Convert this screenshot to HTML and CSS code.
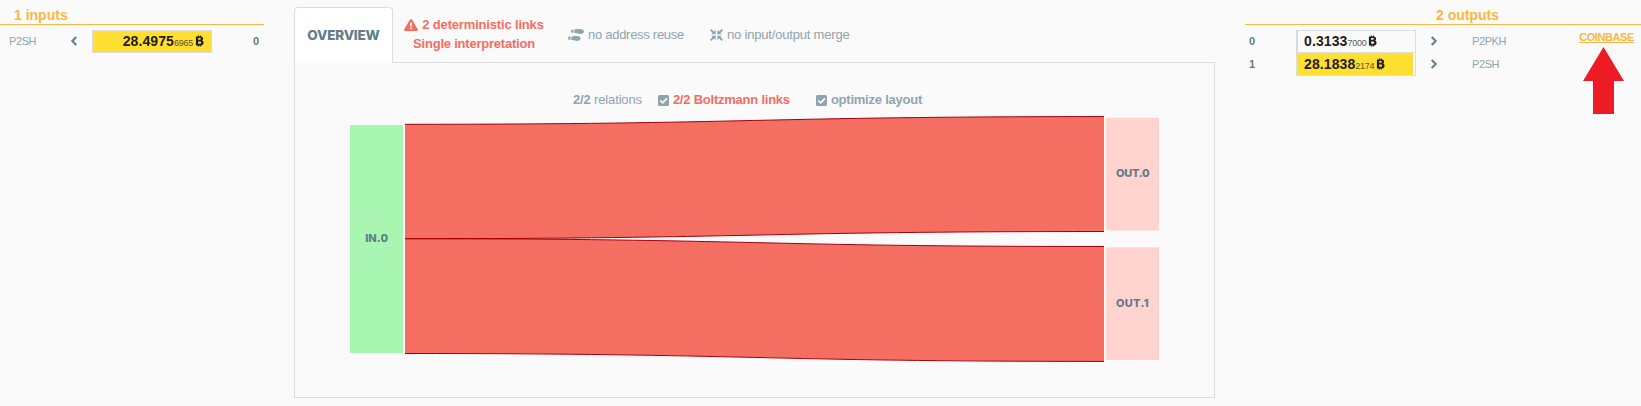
FILE: index.html
```html
<!DOCTYPE html>
<html lang="en">
<head>
<meta charset="utf-8">
<title>Transaction overview</title>
<link rel="stylesheet" href="styles.css">
</head>
<body>
<main class="page">
  <section class="inputs">
    <h2 class="heading"><span>1 inputs</span></h2>
    <div class="row row-in">
      <span class="type">P2SH</span>
      <svg class="chev" viewBox="0 0 8 10"><path d="M6.300 1 2.300 5l4 4"/></svg>
      <span class="amount amount-in"><b>28.4975</b><small>6965</small><svg class="btc" viewBox="0 0 10 12"><path fill-rule="evenodd" d="M1 1h2V0h1.300v1h1V0h1.300v1.100C8.300 1.300 9 2.200 9 3.400c0 1-.4 1.700-1.200 2.100C8.900 5.900 9.500 6.700 9.500 7.900c0 1.800-1 2.900-2.900 3.100v1H5.300v-1h-1v1H3v-1H1zM3.500 2.800v1.900h1.900c1.500 0 1.500-1.900 0-1.900zM3.500 6.500v2.600h2.100c1.700 0 1.700-2.600 0-2.600z"/></svg></span>
      <span class="index">0</span>
    </div>
  </section>

  <section class="center">
    <nav class="tabs">
      <div class="tab"><span>OVERVIEW</span></div>
      <div class="alert">
        <div class="line"><svg class="warn" viewBox="0 0 14 12"><path fill-rule="evenodd" d="M6 .6Q7-.5 8 .6l5.700 9.700Q14.200 12 12.800 12H1.200Q-.2 12 .3 10.300zM6 3.800l.3 3.700h1.400L8 3.800zM6.200 8.500v1.700h1.600V8.500z"/></svg><span class="deterministic">2 deterministic links</span></div>
        <div class="line"><span class="interpretation">Single interpretation</span></div>
      </div>
      <div class="note note-reuse"><svg class="feet" viewBox="0 0 16 12"><path d="M6.300.4C8 .5 9-.1 11.500 0 14.300.1 16 1.100 16 2.600S14.300 5 12.500 5C10.500 5 9.500 3.700 6.300 4zM5.400.6v3.300C3.800 4 3 3.300 3 2.300S3.800.6 5.400.6zM3.300 7.400C5 7.500 6.300 6.800 8.400 6.900c2.700.1 4.300.9 4.300 2.400S11 11.900 9.200 11.900c-2 0-2.700-1.200-5.900-.9zM2.400 7.600v3.300C.9 11 0 10.300 0 9.300s.8-1.700 2.400-1.700z"/></svg><span>no address reuse</span></div>
      <div class="note note-merge"><svg class="compress" viewBox="0 0 13 12"><path d="M5.600.9v4.300H1.300l1.300-1.300L0 1.200 1.200 0l2.700 2.600zM7.400.9l1.700 1.700L11.800 0 13 1.200l-2.600 2.700 1.300 1.300H7.400zM1.300 6.800h4.300v4.300L3.900 9.400 1.200 12 0 10.800l2.600-2.700zM7.400 6.800h4.300l-1.300 1.300 2.600 2.700-1.200 1.200-2.700-2.600-1.700 1.700z"/></svg><span>no input/output merge</span></div>
    </nav>
    <div class="panel">
      <div class="options">
        <span class="relations"><b>2/2</b> relations</span>
        <span class="option boltz"><svg class="check" viewBox="0 0 11 11"><rect width="11" height="11" rx="1.500"/><path d="m2.300 5.500 2.300 2.300 4.300-4.400"/></svg><b>2/2 Boltzmann links</b></span>
        <span class="option"><svg class="check" viewBox="0 0 11 11"><rect width="11" height="11" rx="1.500"/><path d="m2.300 5.500 2.300 2.300 4.300-4.400"/></svg><b>optimize layout</b></span>
      </div>
      <svg class="sankey" viewBox="350 110 810 260">
        <rect class="in" x="350" y="125" width="53" height="228"/>
        <path class="link" d="M405 124.300C754.500 124.300 754.500 116.600 1104 116.600V231.500C754.500 231.500 754.500 238.700 405 238.700z"/>
        <path class="link" d="M405 238.700C754.500 238.700 754.500 246.500 1104 246.500V361.400C754.500 361.400 754.500 353.500 405 353.500z"/>
        <path class="edge" d="M405 124.300C754.500 124.300 754.500 116.600 1104 116.600M405 238.700C754.500 238.700 754.500 231.500 1104 231.500M405 238.700C754.500 238.700 754.500 246.500 1104 246.500M405 353.500C754.500 353.500 754.500 361.400 1104 361.400"/>
        <rect class="out" x="1106" y="117.700" width="53" height="112.800"/>
        <rect class="out" x="1106" y="247.400" width="53" height="112.600"/>
        <text x="365.200" y="242" textLength="22.800">IN.0</text>
        <text x="1116" y="177" textLength="33.500">OUT.0</text>
        <text x="1116" y="307" textLength="32.500">OUT.1</text>
      </svg>
    </div>
  </section>

  <section class="outputs">
    <h2 class="heading"><span>2 outputs</span></h2>
    <div class="out-body">
      <div class="rows">
        <div class="row row-out">
          <span class="index">0</span>
          <span class="amount amount-small"><b>0.3133</b><small>7000</small><svg class="btc" viewBox="0 0 10 12"><path fill-rule="evenodd" d="M1 1h2V0h1.300v1h1V0h1.300v1.100C8.300 1.300 9 2.200 9 3.400c0 1-.4 1.700-1.200 2.100C8.900 5.900 9.500 6.700 9.500 7.900c0 1.800-1 2.900-2.900 3.100v1H5.300v-1h-1v1H3v-1H1zM3.500 2.800v1.900h1.900c1.500 0 1.500-1.900 0-1.900zM3.500 6.500v2.600h2.100c1.700 0 1.700-2.600 0-2.600z"/></svg></span>
          <svg class="chev" viewBox="0 0 8 10"><path d="m1.700 1 4 4-4 4"/></svg>
          <span class="type">P2PKH</span>
        </div>
        <div class="row row-out">
          <span class="index">1</span>
          <span class="amount amount-large"><b>28.1838</b><small>2174</small><svg class="btc" viewBox="0 0 10 12"><path fill-rule="evenodd" d="M1 1h2V0h1.300v1h1V0h1.300v1.100C8.300 1.300 9 2.200 9 3.400c0 1-.4 1.700-1.200 2.100C8.900 5.900 9.500 6.700 9.500 7.900c0 1.800-1 2.900-2.900 3.100v1H5.300v-1h-1v1H3v-1H1zM3.500 2.800v1.900h1.900c1.500 0 1.500-1.900 0-1.900zM3.500 6.500v2.600h2.100c1.700 0 1.700-2.600 0-2.600z"/></svg></span>
          <svg class="chev" viewBox="0 0 8 10"><path d="m1.700 1 4 4-4 4"/></svg>
          <span class="type">P2SH</span>
        </div>
      </div>
      <div class="coinbase">
        <a class="tag">COINBASE</a>
        <svg class="arrow" viewBox="0 0 41 67"><path d="M20.500 0 41 34H31v33H10V34H0z"/></svg>
      </div>
    </div>
  </section>
</main>
</body>
</html>
```
FILE: styles.css
```css
* { box-sizing: border-box; }
body {
  margin: 0;
  height: 406px;
  overflow: hidden;
  background: #fafafa;
  color: #90a4ae;
  font: 13px/18px "Liberation Sans", Arial, sans-serif;
}
svg { display: block; flex: none; }
span, b, a { white-space: nowrap; }
.page {
  display: grid;
  grid-template-columns: 264px 921px 396px;
  column-gap: 30px;
}
.heading {
  margin: 0;
  height: 25px;
  padding-top: 6px;
  border-bottom: 1px solid #f9b742;
  color: #f9b742;
  font-size: 14px;
  line-height: 18px;
}
.inputs .heading { padding-left: 14px; }
.outputs .heading { padding-left: 191px; }

.row { display: grid; align-items: center; height: 23px; }
.row-in { grid-template-columns: 61px 22px 120px 1fr; padding: 0 5px 0 9px; margin-top: 5px; }
.row-out { grid-template-columns: 51px 120px 22px 34px 60px; }
.type { font-size: 11px; letter-spacing: -0.4px; padding-bottom: 1px; }
.row-out .type { grid-column: 5; }
.row-out .chev { grid-column: 3; justify-self: end; }
.index { color: #607d8b; font-size: 11px; font-weight: bold; padding-bottom: 2px; }
.row-in .index { text-align: right; }
.row-out .index { padding-left: 4px; }
.chev { width: 8px; height: 10px; margin-bottom: 1px; fill: none; stroke: #607d8b; stroke-width: 2; }
.amount {
  display: flex;
  align-items: center;
  height: 23px;
  padding: 0 7px 1px;
  border: 1px solid #ddd;
  color: #212121;
}
.amount b { font-size: 14px; letter-spacing: 0.1px; }
.amount small { font-size: 9px; line-height: 10px; letter-spacing: -0.25px; padding-top: 4px; opacity: 0.75; }
.btc { width: 9px; height: 12px; margin-left: 2px; fill: #212121; }
.amount-in { justify-content: flex-end; background: #ffdf32; }
.amount-small { border-left: 2px solid #ddd; border-image: linear-gradient(to right, #ddd 1px, #ddd) 1; border-left-width: 1px; box-shadow: inset 1px 0 #ffdf32; }
.amount-large { border-top: 0; background: linear-gradient(to right, #ffdf32 116px, #fff 116px); }

.out-body { display: flex; justify-content: space-between; padding: 5px 7px 0 0; }
.coinbase { display: flex; flex-direction: column; align-items: center; }
.tag {
  margin-top: 1px;
  height: 12px;
  border-bottom: 1px solid #f9b742;
  color: #f9b742;
  font-size: 11px;
  line-height: 12px;
  font-weight: bold;
  letter-spacing: -0.4px;
}
.arrow { width: 41px; height: 67px; margin: 4px 7px 0 0; fill: #ed1c24; }

.tabs { display: flex; height: 63px; padding-top: 7px; }
.tab {
  width: 99px;
  height: 56px;
  border: 1px solid #ddd;
  border-bottom: 0;
  border-radius: 4px 4px 0 0;
  background: #fff;
  color: #607d8b;
  font: 800 13.5px/54px Inter, sans-serif;
  letter-spacing: -0.2px;
  text-align: center;
}
.alert { width: 138px; margin: 8px 12px 0; color: #f46d61; font-weight: bold; line-height: 19px; }
.line { display: flex; align-items: center; justify-content: center; }
.deterministic { letter-spacing: -0.17px; }
.interpretation { letter-spacing: -0.22px; }
.warn { width: 14px; height: 12px; margin-right: 4px; fill: #f46d61; }
.note { display: flex; align-items: center; height: 55px; }
.note-reuse { margin-left: 13px; letter-spacing: -0.28px; }
.note-merge { margin-left: 26px; letter-spacing: -0.19px; }
.note span { padding-top: 1px; }
.feet { width: 16px; height: 12px; margin-right: 4px; fill: #90a4ae; }
.compress { width: 13px; height: 12px; margin-right: 4px; fill: #90a4ae; }
.panel {
  height: 336px;
  border: 1px solid #ddd;
  border-top: 0;
  background: linear-gradient(#ddd, #ddd) 98px 0 / 100% 1px no-repeat;
  margin-top: -1px;
  padding: 28px 0 0 55px;
}
.options { display: flex; height: 20px; padding-left: 223px; align-items: center; letter-spacing: -0.23px; }
.relations { letter-spacing: -0.15px; }
.option { display: flex; align-items: center; }
.boltz { margin: 0 26px 0 16px; color: #f46d61; }
.check { width: 11px; height: 11px; margin-right: 4px; fill: #90a4ae; }
.check path { fill: none; stroke: #fafafa; stroke-width: 1.7; }
.sankey { width: 810px; height: 260px; }
.in { fill: #a8f6b1; }
.out { fill: #ffd3ce; }
.link { fill: #f46e62; }
.edge { fill: none; stroke: #a5000d; stroke-width: 1; }
.sankey text { fill: #607d8b; font: 800 11px Inter, sans-serif; }
```
